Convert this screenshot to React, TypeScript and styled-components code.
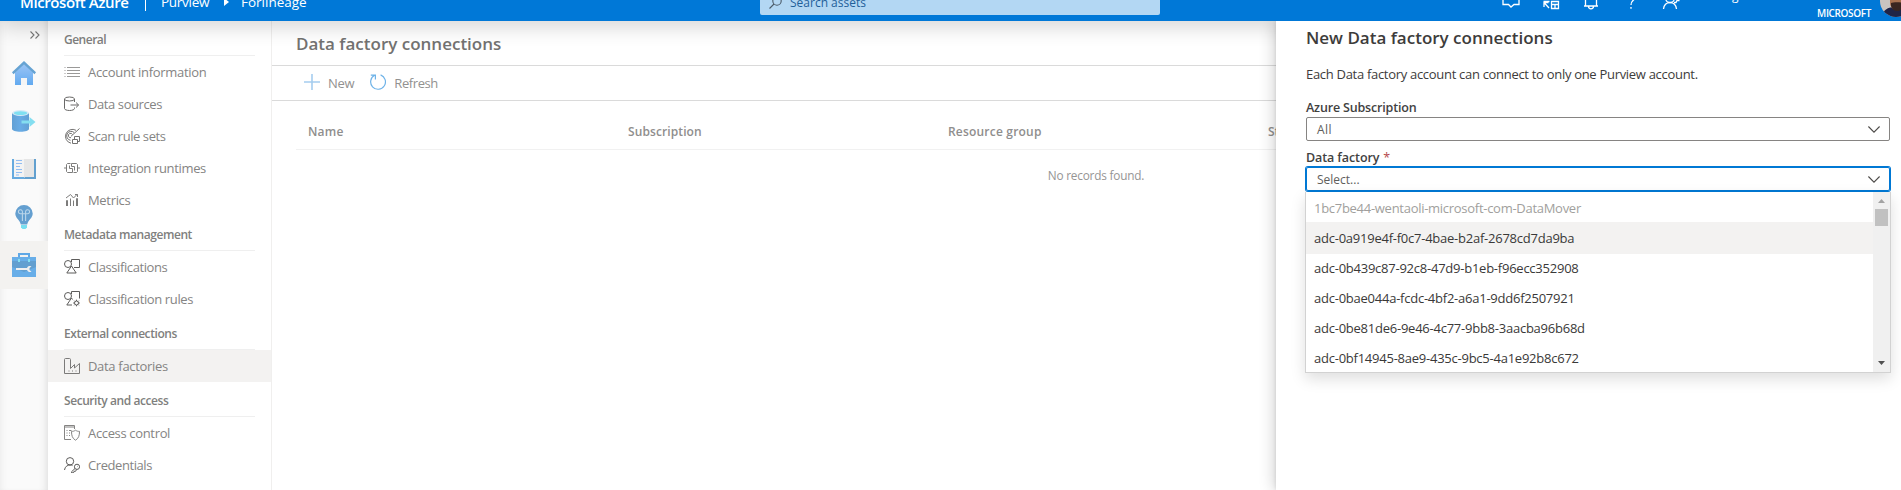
import React from 'react';
import styled, { createGlobalStyle } from 'styled-components';

const GlobalStyle = createGlobalStyle`
  * { box-sizing: border-box; }
  body { margin: 0; background: #fff; overflow: hidden; }
  #root { font-family: "Open Sans", "Noto Sans", sans-serif; }
  svg { display: block; flex: none; }
`;

const Label = styled.span<{ $track?: number }>`
  letter-spacing: ${(p) => p.$track ?? -0.38}px;
  white-space: nowrap;
`;

/* ---------- shell ---------- */
const Page = styled.div`
  height: 490px;
  display: flex;
  flex-direction: column;
  overflow: hidden;
`;
const Header = styled.header`
  flex: none;
  height: 21px;
  position: relative;
  z-index: 1;
  background: #0078d7;
  box-shadow: 0 6px 20px rgba(0, 0, 0, 0.17);
`;
const HeaderClip = styled.div`
  height: 21px;
  overflow: hidden;
`;
const HeaderBar = styled.div`
  height: 40px;
  margin-top: -19px;
  display: flex;
  align-items: center;
  color: #fff;
  font-size: 13.5px;

  > * { flex: none; }
`;
const Brand = styled.div`
  width: 145px;
  padding: 1px 0 0 20px;
  font-size: 15px;
  font-weight: 600;
`;
const BrandRule = styled.div`
  width: 1px;
  height: 20px;
  margin-right: 15px;
  background: #fff;
`;
const Crumbs = styled.nav`
  width: 599px;
  padding-top: 2px;
  display: flex;
  align-items: center;
`;
const Crumb = styled.div<{ $width: number }>`
  width: ${(p) => p.$width}px;
`;
const CrumbArrow = styled.i`
  margin-right: 12px;
  border-left: 5px solid #fff;
  border-top: 4px solid transparent;
  border-bottom: 4px solid transparent;
`;
const SearchBox = styled.div`
  width: 400px;
  height: 28px;
  margin-right: 342px;
  padding: 2px 0 0 9px;
  display: flex;
  align-items: center;
  gap: 8px;
  border-radius: 2px;
  background: #b3d7f3;
  color: #1f5f9a;
  font-size: 12px;
`;
const HeaderIcons = styled.div`
  display: flex;
  align-items: center;
  gap: 22px;
`;
const MailTail = styled.div`
  width: 60px;
  padding-left: 52px;
  margin-top: -12px;
  font-size: 12px;
`;
const Tenant = styled.div`
  width: 131px;
  margin-top: 23px;
  text-align: right;
  font-size: 10px;
  font-weight: 600;
`;
const Avatar = styled.div`
  margin-left: 9px;
  width: 21px;
  height: 32px;
  overflow: hidden;
`;
const Body = styled.div`
  flex: 1;
  min-height: 0;
  display: flex;
`;

/* ---------- rail ---------- */
const Rail = styled.nav`
  flex: none;
  width: 48px;
  background: #fafafa;
  box-shadow: inset -7px 0 8px -6px rgba(0, 0, 0, 0.13), inset 6px 0 8px -6px rgba(0, 0, 0, 0.08);
`;
const Expander = styled.div`
  height: 28px;
  padding: 10px 8px 0 0;
  display: flex;
  justify-content: flex-end;
`;
const RailItem = styled.div<{ $active?: boolean }>`
  height: 48px;
  display: flex;
  align-items: center;
  justify-content: center;
  background: ${(p) => (p.$active ? '#f3f2f0' : 'transparent')};
`;

/* ---------- side menu ---------- */
const Menu = styled.nav`
  flex: none;
  width: 224px;
  border-right: 1px solid #f0efee;
`;
const GroupTitle = styled.div`
  height: 35px;
  margin: 0 16px;
  padding-top: 2px;
  display: flex;
  align-items: center;
  border-bottom: 1px solid #efefef;
  color: #807f7e;
  font-size: 12px;
  font-weight: 600;
`;
const MenuItem = styled.div<{ $active?: boolean }>`
  height: 32px;
  padding: 0 16px;
  display: flex;
  align-items: center;
  gap: 8px;
  background: ${(p) => (p.$active ? '#f3f2f1' : 'transparent')};
  color: #858483;
  font-size: 13px;
`;

/* ---------- main ---------- */
const Main = styled.main`
  flex: none;
  width: 1004px;
  overflow: hidden;
`;
const Title = styled.h1`
  margin: 0;
  height: 45px;
  padding: 0 0 0 24px;
  display: flex;
  align-items: center;
  border-bottom: 1px solid #dadada;
  color: #737271;
  font-size: 17px;
  font-weight: 600;
`;
const Toolbar = styled.div`
  height: 35px;
  padding-left: 32px;
  display: flex;
  align-items: center;
  gap: 16px;
  border-bottom: 1px solid #dadada;
`;
const Command = styled.div`
  display: flex;
  align-items: center;
  gap: 8px;
  color: #929190;
  font-size: 13px;

  svg { margin-top: -2px; }
`;
const Table = styled.div`
  width: 1600px;
  margin: 13px 0 0 24px;
`;
const HeadRow = styled.div`
  height: 36px;
  padding-left: 12px;
  display: grid;
  grid-template-columns: 320px 320px 320px 1fr;
  align-items: center;
  border-bottom: 1px solid #f1f1f1;
  color: #8f8e8d;
  font-size: 12px;
  font-weight: 600;
`;
const EmptyRow = styled.div`
  height: 50px;
  display: flex;
  align-items: center;
  justify-content: center;
  color: #969594;
  font-size: 11.8px;
`;

/* ---------- panel ---------- */
const Panel = styled.aside`
  flex: none;
  width: 625px;
  position: relative;
  z-index: 2;
  padding: 0 11px 0 30px;
  background: #fff;
  color: #323130;
  clip-path: inset(0 0 0 -30px);
  box-shadow: -3px 0 14px rgba(0, 0, 0, 0.16), 0 0 4px rgba(0, 0, 0, 0.12);
`;
const PanelTitle = styled.h2`
  margin: 0;
  height: 33px;
  line-height: 33px;
  font-size: 17px;
  font-weight: 600;
  color: #3d3c3b;
`;
const PanelText = styled.p`
  margin: 8px 0 0;
  height: 24px;
  line-height: 24px;
  font-size: 13px;
  color: #3d3c3b;
`;
const Field = styled.div`
  position: relative;
  padding-top: 8px;
`;
const FieldStack = styled.div`
  margin-top: 5px;
`;
const FieldLabel = styled.div`
  height: 18px;
  line-height: 18px;
  font-size: 12.5px;
  font-weight: 600;
  color: #42413f;
`;
const Required = styled.span`
  margin-left: 4px;
  font-weight: 400;
  color: #b5484d;
`;
const SelectBox = styled.div<{ $open?: boolean }>`
  height: 24px;
  padding: 0 9px 0 10px;
  display: flex;
  align-items: center;
  justify-content: space-between;
  border-radius: 2px;
  border: 1px solid ${(p) => (p.$open ? '#0078d4' : '#868482')};
  box-shadow: ${(p) => (p.$open ? '0 0 0 1px #0078d4' : 'none')};
  color: #605e5c;
  font-size: 12px;
`;
const Dropdown = styled.div`
  position: absolute;
  top: 51px;
  left: -1px;
  width: 586px;
  height: 181px;
  display: flex;
  border: 1px solid #d2d2d2;
  border-top: 0;
  background: #fff;
  box-shadow: 0 6px 14px rgba(0, 0, 0, 0.13);
`;
const Options = styled.div`
  flex: 1;
  padding-top: 1px;
  overflow: hidden;
`;
const Option = styled.div<{ $state?: 'disabled' | 'hover' }>`
  height: 30px;
  padding-left: 8px;
  display: flex;
  align-items: center;
  font-size: 13px;
  color: ${(p) => (p.$state === 'disabled' ? '#a19f9d' : '#3a3938')};
  background: ${(p) => (p.$state === 'hover' ? '#f3f2f1' : 'transparent')};
  box-shadow: ${(p) => (p.$state === 'hover' ? '0 0 0 1px #f3f2f1' : 'none')};
`;
const Scrollbar = styled.div`
  width: 17px;
  padding: 7px 0;
  display: flex;
  flex-direction: column;
  align-items: center;
  background: #f0f0f0;
`;
const Thumb = styled.div`
  width: 13px;
  height: 17px;
  margin: 6px 0 auto;
  background: #c1c1c1;
`;

/* ---------- icons ---------- */
const HeaderIcon = ({ children }: { children: React.ReactNode }) => (
  <svg width="18" height="18" viewBox="0 0 18 18" fill="none" stroke="#fff" strokeWidth="1.3">{children}</svg>
);
const MenuIcon = ({ children, color = '#777675' }: { children: React.ReactNode; color?: string }) => (
  <svg width="16" height="16" viewBox="0 0 16 16" fill="none" stroke={color} strokeWidth="1">{children}</svg>
);
const Chevron = () => (
  <svg width="12" height="7" viewBox="0 0 12 7" fill="none" stroke="#4c4a48" strokeWidth="1.1"><path d="M.4.5 6 6.100 11.600.5" /></svg>
);

const icons = {
  list: (
    <MenuIcon color="#9a9998">
      <path d="M3 3.500h13M3 6.500h13M3 9.500h13M3 12.500h13M.5 3.500h1M.5 6.500h1M.5 9.500h1M.5 12.500h1" />
    </MenuIcon>
  ),
  sources: (
    <MenuIcon color="#6a6968">
      <ellipse cx="5.5" cy="3" rx="5" ry="2" />
      <path d="M.5 3v9.500c0 1 2 2 5 2s5-1 5-2v-1M10.500 3v3M6.500 9h8M12 6.500l2.600 2.500-2.600 2.500" />
    </MenuIcon>
  ),
  scan: (
    <MenuIcon color="#737271">
      <path d="M12 2.300A7 7 0 1 0 7 15.200M10.200 4.500A4.500 4.500 0 1 0 6.500 12.300M8.500 6.500A2.200 2.200 0 1 0 7 9.700M7 8.300 15.500.5" />
      <path d="M8.500 11.500h5v4h-5zM10.500 11.500v-3h5v5h-2" />
    </MenuIcon>
  ),
  runtime: (
    <MenuIcon color="#7d7c7b">
      <path d="M0 8h2.500M13.500 8H16M6.500 3.500h-3l-1 1v7l1 1h5v-4h-3v-3M9.500 12.500h3l1-1v-7l-1-1h-5v3h3v4" />
    </MenuIcon>
  ),
  metrics: (
    <MenuIcon color="#7d7c7b">
      <path d="M2.500 14V8.500h1V14M6.500 14V6.500M9.500 14V8.500M12.500 14V6.500h1V14M2 6l4.500-3.500L9.500 6l4-4M11 2.500h2.500V5" />
    </MenuIcon>
  ),
  shapes: (
    <MenuIcon color="#5d5c5b">
      <circle cx="4" cy="5" r="3.500" />
      <path d="M7.500 3V.5h8v8H10M7.500 7l-4.700 7h9.400L7.500 7z" />
    </MenuIcon>
  ),
  rules: (
    <MenuIcon color="#5d5c5b">
      <circle cx="4" cy="5" r="3.500" />
      <path d="M7.500 3V.5h8v7M7.500 7l-4.700 7H8M7.500 7l1 1.500" />
      <circle cx="12.500" cy="12" r="2" />
      <path d="M12.500 8.700V10M12.500 14v1.300M9.200 12h1.300M14.500 12h1.300M10.200 9.700l.9.900M13.900 13.400l.9.900M14.800 9.700l-.9.900M11.100 13.400l-.9.900" />
    </MenuIcon>
  ),
  factory: (
    <MenuIcon color="#7b7a79">
      <path d="M.5 15.500V1.500c0-.6.400-1 1-1h4c.6 0 1 .400 1 1v9l4-4v3.500l5-4.500v10zM4.500 13h1M8 13h1M11.500 13h1" />
    </MenuIcon>
  ),
  access: (
    <MenuIcon color="#858483">
      <path d="M7 14.500H.5V.5h10V4M.5 2h10" />
      <path d="M2.500 5.500h1M5 5.500h2.500M2.500 8h1M5 8h1M2.500 10.500h1M5 10.500h1" />
      <path d="M11.500 5.200c1.500 1 2.500 1.200 4 1.200 0 4-.8 7-4 8.800-3.200-1.800-4-4.800-4-8.800 1.500 0 2.500-.2 4-1.200z" />
    </MenuIcon>
  ),
  key: (
    <MenuIcon color="#5d5c5b">
      <circle cx="6" cy="4.300" r="3.700" />
      <path d="M.5 13C1 9.500 3.500 8 6 8c1 0 1.800.2 2.500.6" />
      <circle cx="13" cy="9.800" r="2.600" />
      <path d="M11 11.500 7.500 14.800v1h2l.5-1.500h1.500l1.200-1.900M13.500 9.300h.5" />
    </MenuIcon>
  ),
};

const HomeIcon = () => (
  <svg width="24" height="24" viewBox="0 0 24 24">
    <defs><linearGradient id="home" x1="0" y1="0" x2="0" y2="1"><stop offset="0" stopColor="#9cc4f5" /><stop offset="1" stopColor="#62aaf0" /></linearGradient></defs>
    <path d="M3 11.500 12 3l9 8.500V24h-6v-7H9v7H3z" fill="url(#home)" />
    <path d="M9 17h6v7H9z" fill="#f5f5f5" />
    <path d="M12 0 24 11.300l-1.500 1.900L12 3.600 1.500 13.200 0 11.300z" fill="#66a3d3" />
  </svg>
);
const DatabaseIcon = () => (
  <svg width="24" height="24" viewBox="0 0 24 24">
    <defs><linearGradient id="db"><stop offset="0" stopColor="#62a0d4" /><stop offset=".5" stopColor="#68ace6" /><stop offset="1" stopColor="#62a0d4" /></linearGradient></defs>
    <path d="M0 4v16c0 1.600 3.800 2.800 8.500 2.800S17 21.600 17 20V4z" fill="url(#db)" />
    <ellipse cx="8.500" cy="4" rx="8.500" ry="2.900" fill="#d6eaf7" />
    <ellipse cx="8.500" cy="4.200" rx="6.600" ry="1.900" fill="#7fe0f2" />
    <path d="M9.500 11.500h8V8l6 5-6 5v-3.500h-8z" fill="#84def0" />
  </svg>
);
const BookIcon = () => (
  <svg width="24" height="20" viewBox="0 0 24 20">
    <path d="M0 0h24v20H0z" fill="#66aadf" />
    <path d="M12.500 18H22V0h2v20H12z" fill="#62a0cf" />
    <path d="M2 0h10v18H2z" fill="#f3f3f3" />
    <path d="M12 0h10v18h-9l-1 1z" fill="#e6e6e6" />
    <path d="M4 1.500h6M4 4.500h6M4 7.500h4M4 10.500h6M4 13.500h6M4 16h3" stroke="#91bdf2" />
  </svg>
);
const BulbIcon = () => (
  <svg width="24" height="24" viewBox="0 0 24 24" fill="none">
    <path d="M12 0a8.700 8.700 0 0 0-8.700 8.500c0 4.800 4.700 6.500 5.500 11h6.400c.8-4.500 5.500-6.200 5.500-11A8.700 8.700 0 0 0 12 0z" fill="#649fd0" />
    <path d="M9 20h6v2.300L13.500 24h-3L9 22.300z" fill="#78dff0" />
    <path d="M10.400 16V7a2 2 0 1 0-2 1.700h7.200a2 2 0 1 0-2-1.700v9" stroke="#b9d5ea" strokeWidth="1.100" />
  </svg>
);
const ToolboxIcon = () => (
  <svg width="24" height="24" viewBox="0 0 24 24">
    <path d="M7 5V1h10v4" fill="none" stroke="#5fa8e6" strokeWidth="2" />
    <path d="M0 4h24v20H0z" fill="#68aee8" />
    <path d="M0 8h24v6l-12 5L0 14z" fill="#629fd0" />
    <path d="M6 6h2v3H6zM16 6h2v3h-2z" fill="#84dff0" />
    <path d="M4 14.900h11a3.200 3.200 0 0 1 4.500-1.600l-2 1.600v2.200l2 1.600a3.200 3.200 0 0 1-4.500-1.600H4z" fill="#efefef" />
  </svg>
);

const groups: { title: string; track: number; items: [keyof typeof icons, string, number][] }[] = [
  {
    title: 'General', track: -0.5,
    items: [
      ['list', 'Account information', -0.3], ['sources', 'Data sources', -0.41], ['scan', 'Scan rule sets', -0.43],
      ['runtime', 'Integration runtimes', -0.35], ['metrics', 'Metrics', -0.32],
    ],
  },
  { title: 'Metadata management', track: -0.44, items: [['shapes', 'Classifications', -0.4], ['rules', 'Classification rules', -0.38]] },
  { title: 'External connections', track: -0.43, items: [['factory', 'Data factories', -0.31]] },
  { title: 'Security and access', track: -0.43, items: [['access', 'Access control', -0.34], ['key', 'Credentials', -0.43]] },
];

const factories = [
  'adc-0a919e4f-f0c7-4bae-b2af-2678cd7da9ba',
  'adc-0b439c87-92c8-47d9-b1eb-f96ecc352908',
  'adc-0bae044a-fcdc-4bf2-a6a1-9dd6f2507921',
  'adc-0be81de6-9e46-4c77-9bb8-3aacba96b68d',
  'adc-0bf14945-8ae9-435c-9bc5-4a1e92b8c672',
];

const TopBar = () => (
  <Header>
    <HeaderClip>
      <HeaderBar>
        <Brand><Label $track={-0.4}>Microsoft Azure</Label></Brand>
        <BrandRule />
        <Crumbs>
          <Crumb $width={63}><Label $track={-0.27}>Purview</Label></Crumb>
          <CrumbArrow />
          <Label $track={0}>Forlineage</Label>
        </Crumbs>
        <SearchBox>
          <svg width="13" height="13" viewBox="0 0 13 13" fill="none" stroke="#4b5a68" strokeWidth="1.1"><circle cx="8" cy="5" r="4.200" /><path d="M5 8 .5 12.500" /></svg>
          <Label $track={0}>Search assets</Label>
        </SearchBox>
        <HeaderIcons>
          <HeaderIcon><path d="M1 1h16v11.500h-5L9 15l-2.500-2.500H1z" /></HeaderIcon>
          <HeaderIcon><path d="M1 1h16v5H1zM9.500 9.500h7v7h-7zM9.500 12.500h7M13 12.500v4M1.500 9.500h6M2 15V10.500h4.500M2 10.500 7 16" /></HeaderIcon>
          <HeaderIcon><path d="M3.500 14V7a5.500 5.500 0 0 1 11 0v7M2 14h14M6.500 14.300a2.500 2.500 0 0 0 5 0" /></HeaderIcon>
          <HeaderIcon><path d="M4.500 5a4.300 4.300 0 1 1 7 3c-1.500 1.200-2.500 2-2.500 5M9 15v1.800" /></HeaderIcon>
          <HeaderIcon><circle cx="8" cy="6" r="4.500" /><path d="M1.500 17c.5-4 3-6.300 6.500-6.300s6 2.300 6.500 6.300M12 10.500h2l1-2h2.500" /></HeaderIcon>
        </HeaderIcons>
        <MailTail>g</MailTail>
        <Tenant><Label $track={-0.36}>MICROSOFT</Label></Tenant>
        <Avatar>
          <svg width="32" height="32" viewBox="0 0 32 32">
            <defs><clipPath id="face"><circle cx="16" cy="16" r="16" /></clipPath></defs>
            <g clipPath="url(#face)">
              <path d="M0 0h32v32H0z" fill="#c9c4c0" />
              <path d="M2 32c1-7 5-10 14-10s13 3 14 10z" fill="#1f2447" />
              <path d="M10 8h14v10c0 4-3 7-7 7s-7-3-7-7z" fill="#a8714f" />
              <path d="M11 18c2-1 10-1 12 0v3c-1 3-3 5-6 5s-5-2-6-5z" fill="#3a2620" />
            </g>
          </svg>
        </Avatar>
      </HeaderBar>
    </HeaderClip>
  </Header>
);

export default function App() {
  return (
    <Page>
      <GlobalStyle />
      <TopBar />
      <Body>
        <Rail>
          <Expander>
            <svg width="10" height="8" viewBox="0 0 10 8" fill="none" stroke="#777" strokeWidth="1.1"><path d="M.5.5 4 4 .5 7.500M5.500.5 9 4 5.500 7.500" /></svg>
          </Expander>
          <RailItem><HomeIcon /></RailItem>
          <RailItem><DatabaseIcon /></RailItem>
          <RailItem><BookIcon /></RailItem>
          <RailItem><BulbIcon /></RailItem>
          <RailItem $active><ToolboxIcon /></RailItem>
        </Rail>
        <Menu>
          {groups.map((g) => (
            <React.Fragment key={g.title}>
              <GroupTitle><Label $track={g.track}>{g.title}</Label></GroupTitle>
              {g.items.map(([icon, text, track]) => (
                <MenuItem key={text} $active={icon === 'factory'}>
                  {icons[icon]}
                  <Label $track={track}>{text}</Label>
                </MenuItem>
              ))}
            </React.Fragment>
          ))}
        </Menu>
        <Main>
          <Title><Label $track={0}>Data factory connections</Label></Title>
          <Toolbar>
            <Command>
              <svg width="16" height="16" viewBox="0 0 16 16" stroke="#a5cdef" strokeWidth="1.6"><path d="M8 0v16M0 8h16" /></svg>
              <Label $track={-0.3}>New</Label>
            </Command>
            <Command>
              <svg width="16" height="16" viewBox="0 0 16 16" fill="none" stroke="#6fb3e8" strokeWidth="1.2"><path d="M10.600.9A7.400 7.400 0 1 1 4.600 1.300M.8 1.200h4.600v4.300" /></svg>
              <Label $track={-0.4}>Refresh</Label>
            </Command>
          </Toolbar>
          <Table>
            <HeadRow>
              <Label $track={0.2}>Name</Label>
              <Label $track={0.1}>Subscription</Label>
              <Label $track={0.2}>Resource group</Label>
              <Label $track={0}>Status</Label>
            </HeadRow>
            <EmptyRow><Label $track={-0.2}>No records found.</Label></EmptyRow>
          </Table>
        </Main>
        <Panel>
          <PanelTitle><Label $track={0}>New Data factory connections</Label></PanelTitle>
          <PanelText><Label $track={-0.3}>Each Data factory account can connect to only one Purview account.</Label></PanelText>
          <FieldStack>
            <Field>
              <FieldLabel><Label $track={-0.17}>Azure Subscription</Label></FieldLabel>
              <SelectBox><Label $track={0.4}>All</Label><Chevron /></SelectBox>
            </Field>
            <Field>
              <FieldLabel><Label $track={-0.1}>Data factory</Label><Required>*</Required></FieldLabel>
              <SelectBox $open><Label $track={0}>Select...</Label><Chevron /></SelectBox>
              <Dropdown>
                <Options>
                  <Option $state="disabled"><Label $track={-0.28}>1bc7be44-wentaoli-microsoft-com-DataMover</Label></Option>
                  {factories.map((name, i) => (
                    <Option key={name} $state={i === 0 ? 'hover' : undefined}><Label $track={-0.24}>{name}</Label></Option>
                  ))}
                </Options>
                <Scrollbar>
                  <svg width="7" height="4" viewBox="0 0 7 4"><path d="M3.500 0 7 4H0z" fill="#a3a3a3" /></svg>
                  <Thumb />
                  <svg width="7" height="4" viewBox="0 0 7 4"><path d="M0 0h7L3.500 4z" fill="#505050" /></svg>
                </Scrollbar>
              </Dropdown>
            </Field>
          </FieldStack>
        </Panel>
      </Body>
    </Page>
  );
}
